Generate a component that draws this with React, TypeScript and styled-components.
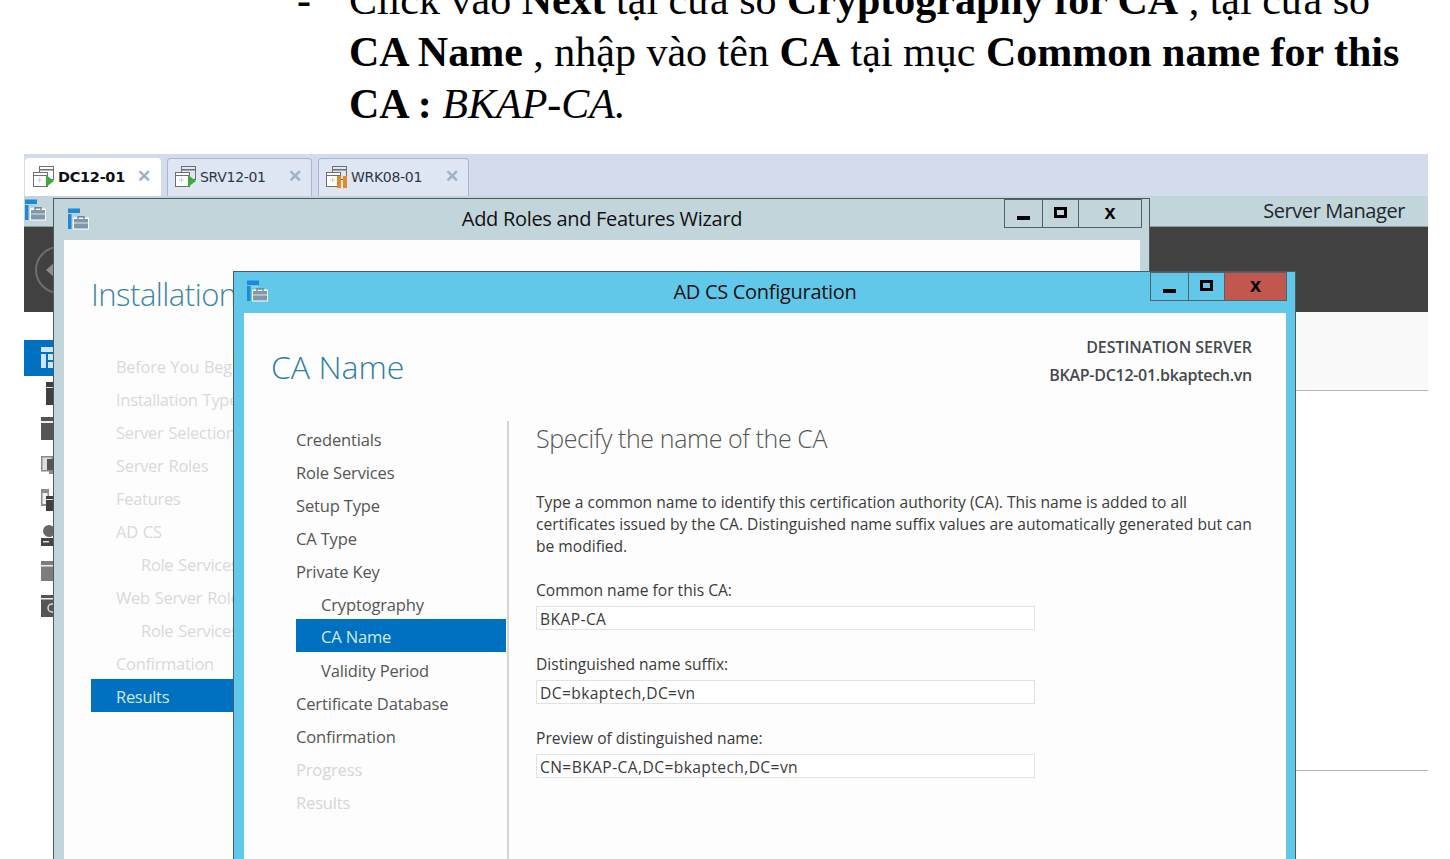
import React from "react";
import styled, { createGlobalStyle } from "styled-components";

const Global = createGlobalStyle`
  html, body { margin: 0; padding: 0; background: #fff; }
  * { box-sizing: border-box; }
  svg { flex: none; }
  #root { width: 1450px; height: 859px; overflow: hidden; }
`;
const UI = `"Open Sans", "Noto Sans", "Liberation Sans", sans-serif`;

const Page = styled.div`
  width: 1450px; height: 859px; overflow: hidden; background: #fff;
  display: flex; flex-direction: column;
`;
const DocArea = styled.div`
  height: 154px; overflow: hidden; flex: none;
  display: flex; padding-left: 297px;
  font-family: "Liberation Serif", "Times New Roman", serif;
  font-size: 42px; line-height: 52px; color: #000;
`;
const DocBullet = styled.div`
  width: 52px; flex: none; margin-top: -26px; font-weight: 700;
`;
const DocText = styled.div`
  width: 1090px; flex: none; margin-top: -26px;
`;
const Line = styled.div` white-space: nowrap; `;

const Shot = styled.div`
  position: relative; margin-left: 24px; width: 1404px; height: 705px; overflow: hidden;
  background: #fff; font-family: ${UI}; flex: none;
`;
const TabBar = styled.div`
  height: 42px; background: #d3dcec; display: flex; align-items: flex-end; gap: 6px; padding-left: 1px;
`;
const Tab = styled.div<{ $active?: boolean; $w: number }>`
  width: ${p => p.$w}px; height: 38px; padding: 0 9px 2px 6px;
  display: flex; align-items: center;
  background: ${p => (p.$active ? "#fff" : "#dfe6f3")};
  border: 1px solid ${p => (p.$active ? "#fff" : "#a9b7cb")}; border-bottom: none;
  border-radius: 4px 4px 0 0;
  font-family: "DejaVu Sans", sans-serif;
  font-size: ${p => (p.$active ? 14.5 : 14)}px; font-weight: ${p => (p.$active ? 700 : 400)};
  color: ${p => (p.$active ? "#0d1016" : "#2e3744")};
`;
const TabName = styled.span` margin-left: 3px; letter-spacing: -0.3px; flex: 1; `;
const TabClose = styled.span`
  color: #9cb0c8; font-size: 17px; font-weight: 700; line-height: 1; font-family: "Liberation Sans", sans-serif;
`;
const ManagerTitle = styled.div`
  height: 31px; background: #c2d5db; border-bottom: 1px solid #8aa0a8;
  display: flex; align-items: center; justify-content: space-between; padding: 0 23px 2px 0;
  font-size: 20px; letter-spacing: -0.42px; color: #20282c;
`;
const ManagerDark = styled.div`
  height: 85px; background: #414141; display: flex; align-items: center; padding-left: 11px;
`;
const BackCircle = styled.div`
  width: 48px; height: 48px; border-radius: 50%; border: 2px solid #6e6e6e; flex: none;
  display: flex; align-items: center; padding-left: 9px;
`;
const BackArrow = styled.span`
  display: block; width: 0; height: 0; border-style: solid; border-width: 9px 10px 9px 0;
  border-color: transparent #8c8c8c transparent transparent;
`;
const ManagerBody = styled.div` display: flex; height: 547px; `;
const SideRail = styled.div` width: 29px; flex: none; background: #fff; padding-top: 28px; `;
const RailItem = styled.div<{ $active?: boolean }>`
  height: ${p => (p.$active ? 36 : 35.5)}px; display: flex; align-items: center; justify-content: flex-end;
  background: ${p => (p.$active ? "#0070c0" : "transparent")};
`;
const RightPanel = styled.div` flex: 1; display: flex; flex-direction: column; `;
const PanelTop = styled.div` height: 79px; background: #f9f9f9; border-bottom: 1px solid #b4b4b4; `;
const PanelMid = styled.div` height: 380px; background: #fff; border-bottom: 1px solid #b4b4b4; `;

const Window = styled.div<{ $x: number; $y: number; $w: number; $bg: string }>`
  position: absolute; left: ${p => p.$x}px; top: ${p => p.$y}px; width: ${p => p.$w}px; bottom: -40px;
  background: ${p => p.$bg}; border: 1px solid #4c5b60; padding: 0 9px 0 10px;
  display: flex; flex-direction: column;
`;
const TitleBar = styled.div`
  position: relative; height: 41px; flex: none; display: flex; align-items: center; justify-content: center;
  padding-bottom: 2px;
  font-size: 20px; letter-spacing: -0.3px; color: #111;
`;
const TitleIcon = styled.span<{ $x: number; $y: number }>`
  position: absolute; left: ${p => p.$x}px; top: ${p => p.$y}px; display: block; line-height: 0;
`;
const Controls = styled.div<{ $r: number; $h: number }>`
  position: absolute; right: ${p => p.$r}px; top: 0; height: ${p => p.$h}px; display: flex;
  border: 1px solid #50636b;
`;
const Ctl = styled.div<{ $w: number; $bg?: string }>`
  width: ${p => p.$w}px; display: flex; align-items: center; justify-content: center;
  background: ${p => p.$bg || "transparent"};
  & + & { border-left: 1px solid #50636b; }
`;
const MinGlyph = styled.span` display: block; width: 13px; height: 4px; background: #000; margin-top: 9px; `;
const MaxGlyph = styled.span` display: block; width: 13px; height: 11px; border: 3px solid #000; margin-top: -3px; `;
const XGlyph = styled.span`
  font-family: "Liberation Sans", sans-serif; font-weight: 700; font-size: 20px; color: #000; line-height: 1; margin-top: -4px;
`;

const WizardBody = styled.div`
  flex: 1; background: #fdfdfd; padding: 35px 0 0 27px;
`;
const WizardHeading = styled.div`
  font-size: 31px; font-weight: 300; line-height: 38px; color: #3c86a6; letter-spacing: -0.5px; margin-bottom: 36px;
`;
const WizNav = styled.div` display: flex; flex-direction: column; width: 142px; `;
const WizRow = styled.div<{ $sub?: boolean; $active?: boolean }>`
  height: 33px; line-height: 36px; padding-left: ${p => (p.$sub ? 50 : 25)}px; white-space: nowrap;
  font-size: 16.5px; letter-spacing: -0.3px; word-spacing: 1px; overflow: hidden;
  background: ${p => (p.$active ? "#0070c0" : "transparent")};
  color: ${p => (p.$active ? "#cfe6f6" : "#d9d9d9")};
`;

const DialogBody = styled.div`
  flex: 1; background: #fdfdfd; padding: 19px 33px 0 27px; display: flex; flex-direction: column;
`;
const DialogHead = styled.div` display: flex; justify-content: space-between; height: 89px; `;
const DialogHeading = styled.div`
  font-size: 32px; font-weight: 300; line-height: 38px; margin-top: 16px; color: #2e7fa3;
`;
const Dest = styled.div`
  text-align: right; font-size: 16px; font-weight: 600; line-height: 28px; padding-top: 1px;
  color: #45494e; margin-right: 1px;
`;
const DestLine = styled.div<{ $ls: number }>` letter-spacing: ${p => p.$ls}px; `;
const DialogMain = styled.div` display: flex; flex: 1; padding-left: 25px; `;
const Nav = styled.div` width: 213px; flex: none; border-right: 2px solid #d4d4d4; padding-right: 1px; `;
const NavRow = styled.div<{ $sub?: boolean; $active?: boolean; $off?: boolean }>`
  height: 33px; line-height: ${p => (p.$active ? 36 : 38)}px; padding-left: ${p => (p.$sub ? 25 : 0)}px;
  font-size: 16.5px; letter-spacing: -0.15px; white-space: nowrap;
  background: ${p => (p.$active ? "#0070c0" : "transparent")};
  color: ${p => (p.$active ? "#d3e8f7" : p.$off ? "#d6d6d6" : "#555")};
`;
const Content = styled.div` flex: 1; padding-left: 27px; color: #333; `;
const ContentHeading = styled.div`
  font-size: 25px; font-weight: 300; line-height: 34px; color: #555; letter-spacing: -0.4px; margin-bottom: 36px;
`;
const Para = styled.div`
  font-size: 15.6px; line-height: 22px; width: 718px; color: #3a3a3a; letter-spacing: 0; margin-bottom: 22px;
`;
const FieldLabel = styled.div`
  font-size: 15.6px; line-height: 22px; color: #3a3a3a; margin-bottom: 5px;
`;
const Field = styled.div`
  width: 499px; height: 24px; border: 1px solid #e2e2e2; padding-left: 3px;
  font-size: 15.6px; line-height: 24px; letter-spacing: 0.4px; color: #3a3a3a; margin-bottom: 23px; background: #fff;
`;

const SrvIcon = () => (
  <svg width="22" height="22" viewBox="0 0 22 22">
    <rect x="1" y="0.5" width="12" height="4.5" fill="#1f88d8" />
    <rect x="1" y="6" width="3.5" height="15" fill="#1f88d8" />
    <rect x="5.5" y="6" width="7" height="1.5" fill="#9fcdf0" />
    <rect x="6" y="9.5" width="16" height="12" fill="#fff" />
    <rect x="7" y="11" width="14" height="9.5" fill="#7f99ab" />
    <rect x="7" y="14.5" width="14" height="1" fill="#dfe8ee" />
    <path d="M11 11V8.8h6V11" fill="none" stroke="#6f8796" strokeWidth="1.4" />
  </svg>
);
const VmIcon = ({ off }: { off?: boolean }) => (
  <svg width="23" height="23" viewBox="0 0 23 23">
    <g fill="none" stroke="#6f6f6f" strokeWidth="1">
      <rect x="7.5" y="1.5" width="14" height="13" />
      <rect x="7.5" y="4.5" width="14" height="0.5" />
    </g>
    <rect x="1.5" y="7.5" width="14" height="14" fill="#fff" stroke="#6f6f6f" />
    <rect x="1.5" y="7.5" width="14" height="3" fill="#fff" stroke="#6f6f6f" />
    <path d="M5 15h5M7.5 12.5v5" stroke="#cfcfcf" strokeWidth="1" />
    {off ? (
      <g fill="#e08a2c"><rect x="12" y="11" width="4" height="12" /><rect x="18" y="11" width="4" height="12" /></g>
    ) : (
      <path d="M14 10 22 16 14 22Z" fill="#3dab3d" />
    )}
  </svg>
);
const Rail1 = () => (
  <svg width="7" height="24" viewBox="0 0 7 24"><rect width="7" height="23" fill="#3f3f3f" /><rect y="5" width="7" height="1" fill="#ddd" /></svg>
);
const Rail2 = () => (
  <svg width="12" height="24" viewBox="0 0 12 24"><rect width="12" height="23" fill="#555" /><rect y="4" width="12" height="2" fill="#eee" /></svg>
);
const Rail3 = () => (
  <svg width="12" height="24" viewBox="0 0 12 24"><rect x="0.75" y="3.75" width="10.5" height="14" fill="#ddd" stroke="#8a8a8a" strokeWidth="1.5" /><rect x="6" y="6" width="6" height="11" fill="#555" /><rect x="8" y="17" width="4" height="4" fill="#888" /></svg>
);
const Rail4 = () => (
  <svg width="12" height="24" viewBox="0 0 12 24"><rect y="1" width="8" height="17" fill="#8c8c8c" /><rect x="1.5" y="5" width="5" height="11" fill="#eee" /><rect x="5" y="8" width="7" height="15" fill="#3f3f3f" /><rect x="5" y="11" width="7" height="1" fill="#ddd" /></svg>
);
const Rail5 = () => (
  <svg width="12" height="24" viewBox="0 0 12 24"><circle cx="8" cy="7" r="6" fill="#666" /><rect y="14" width="12" height="8" fill="#444" /><rect x="2" y="17" width="6" height="1.5" fill="#ddd" /></svg>
);
const Rail6 = () => (
  <svg width="12" height="24" viewBox="0 0 12 24"><rect y="2" width="12" height="20" fill="#7d7d7d" /><rect y="6" width="12" height="1.5" fill="#eee" /></svg>
);
const Rail7 = () => (
  <svg width="12" height="24" viewBox="0 0 12 24"><rect width="12" height="22" fill="#555" /><rect y="3" width="12" height="1.5" fill="#eee" /><circle cx="11" cy="13" r="4" fill="none" stroke="#ddd" strokeWidth="1.5" /></svg>
);
const ActiveGlyph = () => (
  <svg width="12" height="22" viewBox="0 0 12 22">
    <rect width="12" height="5" fill="#cfe4f5" />
    <rect y="7" width="5" height="14" fill="#cfe4f5" />
    <rect x="7" y="7" width="5" height="6" fill="#cfe4f5" />
    <rect x="7" y="15" width="5" height="6" fill="#cfe4f5" />
  </svg>
);

const wizardRows: [string, boolean?, boolean?][] = [
  ["Before You Begin"], ["Installation Type"], ["Server Selection"], ["Server Roles"], ["Features"], ["AD CS"],
  ["Role Services", true], ["Web Server Role (IIS)"], ["Role Services", true], ["Confirmation"], ["Results", false, true],
];
const dialogRows: { t: string; sub?: boolean; active?: boolean; off?: boolean }[] = [
  { t: "Credentials" }, { t: "Role Services" }, { t: "Setup Type" }, { t: "CA Type" }, { t: "Private Key" },
  { t: "Cryptography", sub: true }, { t: "CA Name", sub: true, active: true }, { t: "Validity Period", sub: true },
  { t: "Certificate Database" }, { t: "Confirmation" }, { t: "Progress", off: true }, { t: "Results", off: true },
];

export default function App() {
  return (
    <Page>
      <Global />
      <DocArea>
        <DocBullet>-</DocBullet>
        <DocText>
          <Line>Click vào <b>Next</b> tại cửa sổ <b>Cryptography for CA</b> , tại cửa sổ</Line>
          <Line><b>CA Name</b> , nhập vào tên <b>CA</b> tại mục <b>Common name for this</b></Line>
          <Line><b>CA :</b> <i>BKAP-CA.</i></Line>
        </DocText>
      </DocArea>
      <Shot>
        <TabBar>
          <Tab $active $w={136}><VmIcon /><TabName>DC12-01</TabName><TabClose>✕</TabClose></Tab>
          <Tab $w={145}><VmIcon /><TabName>SRV12-01</TabName><TabClose>✕</TabClose></Tab>
          <Tab $w={151}><VmIcon off /><TabName>WRK08-01</TabName><TabClose>✕</TabClose></Tab>
        </TabBar>
        <ManagerTitle>
          <SrvIcon />
          <span>Server Manager</span>
        </ManagerTitle>
        <ManagerDark><BackCircle><BackArrow /></BackCircle></ManagerDark>
        <ManagerBody>
          <SideRail>
            <RailItem $active><ActiveGlyph /></RailItem>
            <RailItem><Rail1 /></RailItem>
            <RailItem><Rail2 /></RailItem>
            <RailItem><Rail3 /></RailItem>
            <RailItem><Rail4 /></RailItem>
            <RailItem><Rail5 /></RailItem>
            <RailItem><Rail6 /></RailItem>
            <RailItem><Rail7 /></RailItem>
          </SideRail>
          <RightPanel>
            <PanelTop />
            <PanelMid />
          </RightPanel>
        </ManagerBody>

        <Window $x={29} $y={44} $w={1097} $bg="#c2d5db">
          <TitleBar>Add Roles and Features Wizard
            <TitleIcon $x={3} $y={9}><SrvIcon /></TitleIcon>
            <Controls $r={-2} $h={29}>
              <Ctl $w={37}><MinGlyph /></Ctl>
              <Ctl $w={36}><MaxGlyph /></Ctl>
              <Ctl $w={63}><XGlyph>x</XGlyph></Ctl>
            </Controls>
          </TitleBar>
          <WizardBody>
            <WizardHeading>Installation Progress</WizardHeading>
            <WizNav>
              {wizardRows.map(([t, sub, active], i) => (
                <WizRow key={i} $sub={sub} $active={active}>{t}</WizRow>
              ))}
            </WizNav>
          </WizardBody>
        </Window>

        <Window $x={209} $y={117} $w={1063} $bg="#62c8ea">
          <TitleBar>AD CS Configuration
            <TitleIcon $x={2} $y={8}><SrvIcon /></TitleIcon>
            <Controls $r={-1} $h={29}>
              <Ctl $w={37}><MinGlyph /></Ctl>
              <Ctl $w={36}><MaxGlyph /></Ctl>
              <Ctl $w={62} $bg="#c2574f"><XGlyph>x</XGlyph></Ctl>
            </Controls>
          </TitleBar>
          <DialogBody>
            <DialogHead>
              <DialogHeading>CA Name</DialogHeading>
              <Dest>
                <DestLine $ls={-0.05}>DESTINATION SERVER</DestLine>
                <DestLine $ls={-0.28}>BKAP-DC12-01.bkaptech.vn</DestLine>
              </Dest>
            </DialogHead>
            <DialogMain>
              <Nav>
                {dialogRows.map(r => (
                  <NavRow key={r.t} $sub={r.sub} $active={r.active} $off={r.off}>{r.t}</NavRow>
                ))}
              </Nav>
              <Content>
                <ContentHeading>Specify the name of the CA</ContentHeading>
                <Para>Type a common name to identify this certification authority (CA). This name is added to all certificates issued by the CA. Distinguished name suffix values are automatically generated but can be modified.</Para>
                <FieldLabel>Common name for this CA:</FieldLabel>
                <Field>BKAP-CA</Field>
                <FieldLabel>Distinguished name suffix:</FieldLabel>
                <Field>DC=bkaptech,DC=vn</Field>
                <FieldLabel>Preview of distinguished name:</FieldLabel>
                <Field>CN=BKAP-CA,DC=bkaptech,DC=vn</Field>
              </Content>
            </DialogMain>
          </DialogBody>
        </Window>
      </Shot>
    </Page>
  );
}
